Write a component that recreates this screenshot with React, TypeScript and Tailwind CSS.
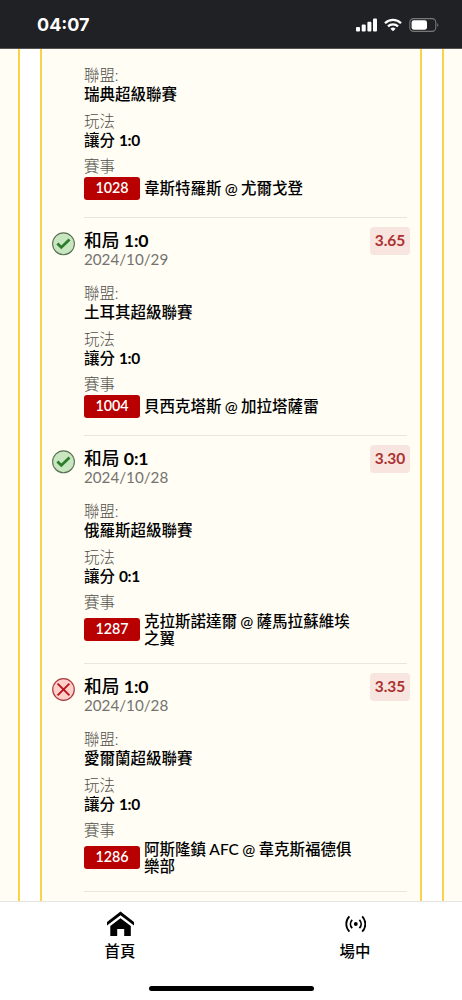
import type { ReactNode } from 'react';

type Bet = {
  won?: boolean;
  pick?: string;
  date?: string;
  odds?: string;
  league: string;
  handicap: string;
  code: string;
  match: string[];
};

const bets: Bet[] = [
  { league: '瑞典超級聯賽', handicap: '1:0', code: '1028', match: ['韋斯特羅斯 @ 尤爾戈登'] },
  { won: true, pick: '1:0', date: '2024/10/29', odds: '3.65', league: '土耳其超級聯賽', handicap: '1:0', code: '1004', match: ['貝西克塔斯 @ 加拉塔薩雷'] },
  { won: true, pick: '0:1', date: '2024/10/28', odds: '3.30', league: '俄羅斯超級聯賽', handicap: '0:1', code: '1287', match: ['克拉斯諾達爾 @ 薩馬拉蘇維埃', '之翼'] },
  { won: false, pick: '1:0', date: '2024/10/28', odds: '3.35', league: '愛爾蘭超級聯賽', handicap: '1:0', code: '1286', match: ['阿斯隆鎮 AFC @ 韋克斯福德俱', '樂部'] },
];

function StatusBar() {
  return (
    <header className="flex h-[49px] shrink-0 items-center justify-between border-b border-[#55534f] bg-[#202124] pr-[23px] pl-[37px] text-white">
      <span className="mt-[2px] font-['Inter','Liberation_Sans',sans-serif] text-[18px] leading-5 font-bold">04:07</span>
      <div className="mt-[2px] flex items-center">
        <svg width="22" height="14" viewBox="0 0 22 14" fill="currentColor">
          <rect x="0" y="9" width="4" height="4.5" rx="1" />
          <rect x="5.7" y="6.5" width="4" height="7" rx="1" />
          <rect x="11.4" y="3.7" width="4" height="9.8" rx="1" />
          <rect x="17" y="0.5" width="4" height="13" rx="1" />
        </svg>
        <svg className="ml-[6px]" width="18" height="14" viewBox="0 0 18 14" fill="none" stroke="currentColor" strokeWidth="2.3">
          <path d="M1 5.2a11.4 11.4 0 0 1 16 0" />
          <path d="M4 8.4a7.1 7.1 0 0 1 10 0" />
          <path d="M9 13.3 6.4 10.7a3.7 3.7 0 0 1 5.2 0z" fill="currentColor" stroke="none" />
        </svg>
        <svg className="ml-[7px]" width="30" height="14" viewBox="0 0 30 14">
          <rect x="0.8" y="0.6" width="26" height="12.8" rx="3.8" fill="none" stroke="#77787a" strokeWidth="1.1" />
          <rect x="2.6" y="2.3" width="15.4" height="9.4" rx="2.1" fill="white" />
          <path d="M28.3 5c1.4.6 1.4 3.4 0 4z" fill="#77787a" />
        </svg>
      </div>
    </header>
  );
}

function ResultIcon({ won }: { won?: boolean }) {
  if (won) {
    return (
      <svg width="24" height="24" viewBox="0 0 24 24" fill="none">
        <circle cx="11.5" cy="11.8" r="10.9" fill="#c8e6c0" stroke="#5a7355" strokeWidth="1.1" />
        <path d="m5.4 11.5 3.9 3.9 8.2-8" stroke="#2c7d2b" strokeWidth="2.8" />
      </svg>
    );
  }
  return (
    <svg width="24" height="24" viewBox="0 0 24 24" fill="none">
      <circle cx="11.5" cy="11.5" r="10.8" fill="#ffcfca" stroke="#a83a3e" strokeWidth="1.2" />
      <path d="m5.6 5.6 11.8 11.8m0-11.8L5.6 17.4" stroke="#b8141c" strokeWidth="1.9" />
    </svg>
  );
}

function Label({ children }: { children: ReactNode }) {
  return <div className="h-[18px] text-[15.4px] leading-[18px] font-light text-[#504f4b]">{children}</div>;
}

function Value({ children }: { children: ReactNode }) {
  return <div className="mt-px h-[18px] text-[15.5px] leading-[18px] font-medium text-black">{children}</div>;
}

function BetItem({ bet }: { bet: Bet }) {
  return (
    <section className="flex">
      <div className="w-[42px] shrink-0 pt-[14px] pl-[10px]">
        {bet.pick && <ResultIcon won={bet.won} />}
      </div>
      <div className="w-[323px] border-b border-[#e9e6de]">
        {bet.pick && (
          <div className="flex h-[66px] items-start justify-between pt-[9px]">
            <div className="pt-1">
              <h2 className="h-[19px] text-[17.7px] leading-5 font-medium text-black">
                和局 <span className="font-bold tracking-[-0.2px]">{bet.pick}</span>
              </h2>
              <p className="h-[18px] text-[15.2px] leading-[18px] text-[#74736f]">{bet.date}</p>
            </div>
            <span className="-mr-[3px] flex h-[28px] w-10 items-center justify-center rounded-[4px] bg-[#f8e5df] text-[15.5px] font-bold text-[#ad3030]">
              {bet.odds}
            </span>
          </div>
        )}
        <Label>聯盟:</Label>
        <Value>{bet.league}</Value>
        <div className="mt-[9px]">
          <Label>玩法</Label>
          <Value>
            讓分 <span className="font-bold tracking-[-0.3px]">{bet.handicap}</span>
          </Value>
        </div>
        <div className="mt-2">
          <Label>賽事</Label>
        </div>
        <div className="mt-[2px] mb-[17px] flex items-center">
          <span className="mr-1 flex h-[23px] w-14 items-center justify-center rounded-[3px] bg-[#b80000] text-[14.3px] leading-none font-semibold text-white">
            {bet.code}
          </span>
          <div className="text-[15.5px] leading-[16.5px] font-medium [word-spacing:-0.6px] whitespace-nowrap text-black">
            {bet.match.map((line) => (
              <div key={line}>{line}</div>
            ))}
          </div>
        </div>
      </div>
    </section>
  );
}

function BottomNav() {
  return (
    <nav className="flex h-[99px] shrink-0 flex-col border-t border-[#e5e4e2] bg-white text-black">
      <div className="flex h-[84px]">
        <a className="flex w-[240px] shrink-0 flex-col items-center pt-[9px]">
          <svg width="28" height="26" viewBox="0 0 28 26" fill="currentColor">
            <path d="M14.5 .6 28 11v3.4L14.5 4.2 1 14.4V11z" />
            <path d="m14.5 7.2 10.3 7.7v10h-6.6v-7h-7v7H4.3v-10z" />
          </svg>
          <span className="mt-[5px] text-[15.4px] leading-[18px] font-medium">首頁</span>
        </a>
        <a className="flex w-[230px] shrink-0 flex-col items-center pt-[9px]">
          <svg className="my-[3px]" width="22" height="20" viewBox="0 0 22 20" fill="none" stroke="currentColor" strokeWidth="1.8">
            <circle cx="11.8" cy="10" r="1.9" fill="currentColor" stroke="none" />
            <path d="M8.2 5.8c-2.3 2.4-2.3 6 0 8.4M15.4 5.8c2.3 2.4 2.3 6 0 8.4M5.4 2.4c-4.2 4.4-4.2 10.8 0 15.2M18.2 2.4c4.2 4.4 4.2 10.8 0 15.2" />
          </svg>
          <span className="mt-[5px] text-[15.4px] leading-[18px] font-medium">場中</span>
        </a>
      </div>
      <div className="mx-auto h-[5px] w-[165px] rounded-full bg-black" />
    </nav>
  );
}

export default function App() {
  return (
    <div className="flex h-[1000px] w-[462px] flex-col overflow-hidden bg-[#fffdf4] font-['Lato','Noto_Sans_CJK_TC',sans-serif]">
      <StatusBar />
      <main className="min-h-0 flex-1 overflow-hidden px-[18px]">
        <div className="border-x-2 border-[#fbd34b] bg-white px-5">
          <div className="min-h-[852px] border-x-2 border-[#fbd34b] bg-[#fffdf4] pt-[17px]">
            {bets.map((bet) => (
              <BetItem key={bet.code} bet={bet} />
            ))}
          </div>
        </div>
      </main>
      <BottomNav />
    </div>
  );
}
